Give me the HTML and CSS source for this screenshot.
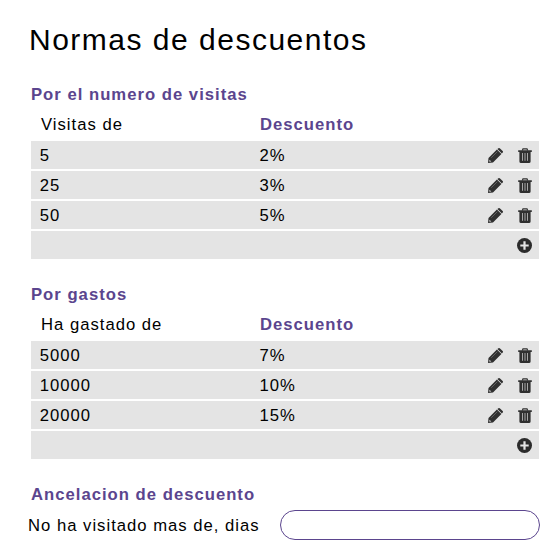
FILE: index.html
```html
<!DOCTYPE html>
<html lang="es">
<head>
<meta charset="utf-8">
<title>Normas de descuentos</title>
<link rel="stylesheet" href="styles.css">
</head>
<body>
<svg class="defs" width="0" height="0">
  <symbol id="pencil" viewBox="0 0 15 15">
    <path fill="#303030" d="M0 15 .5 10 8.9 1.6 13.4 6.1 5 14.5Z M9.4 1.1 10.4.3Q11.2-.2 12 .4L14.7 3.1Q15.3 3.8 14.7 4.6L13.9 5.6Z"/>
    <path fill="none" stroke="#777" stroke-width=".7" d="M3.2 9.8 9.3 3.7"/>
    <path fill="#d0d0d0" d="M1.5 11.7 3.3 13.5 1.7 13.8 1.2 13.3Z"/>
  </symbol>
  <symbol id="trash" viewBox="0 0 14 15">
    <path fill="none" stroke="#303030" stroke-width="1.2" d="M4.3 2.4 5 .8H9L9.7 2.4"/>
    <path fill="#303030" d="M.2 2.2H13.8V4H12.6V13.4Q12.6 15 11 15H3Q1.4 15 1.4 13.4V4H.2Z"/>
    <path fill="none" stroke="#b4b4b4" stroke-width=".9" d="M4.5 5V12.8M7 5V12.8M9.5 5V12.8"/>
  </symbol>
  <symbol id="plus" viewBox="0 0 15 15">
    <circle cx="7.5" cy="7.5" r="7.5" fill="#2b2b2b"/>
    <path fill="none" stroke="#e4e4e4" stroke-width="2.2" d="M7.5 3.3V11.7M3.3 7.5H11.7"/>
  </symbol>
</svg>
<main>
  <h1>Normas de descuentos</h1>
  <section>
    <h2>Por el numero de visitas</h2>
    <div class="head"><span>Visitas de</span><b>Descuento</b></div>
    <div class="row"><span>5</span><span>2%</span><svg class="pencil"><use href="#pencil"/></svg><svg class="trash"><use href="#trash"/></svg></div>
    <div class="row"><span>25</span><span>3%</span><svg class="pencil"><use href="#pencil"/></svg><svg class="trash"><use href="#trash"/></svg></div>
    <div class="row"><span>50</span><span>5%</span><svg class="pencil"><use href="#pencil"/></svg><svg class="trash"><use href="#trash"/></svg></div>
    <div class="row add"><svg class="plus"><use href="#plus"/></svg></div>
  </section>
  <section>
    <h2>Por gastos</h2>
    <div class="head"><span>Ha gastado de</span><b>Descuento</b></div>
    <div class="row"><span>5000</span><span>7%</span><svg class="pencil"><use href="#pencil"/></svg><svg class="trash"><use href="#trash"/></svg></div>
    <div class="row"><span>10000</span><span>10%</span><svg class="pencil"><use href="#pencil"/></svg><svg class="trash"><use href="#trash"/></svg></div>
    <div class="row"><span>20000</span><span>15%</span><svg class="pencil"><use href="#pencil"/></svg><svg class="trash"><use href="#trash"/></svg></div>
    <div class="row add"><svg class="plus"><use href="#plus"/></svg></div>
  </section>
  <section class="last">
    <h2>Ancelacion de descuento</h2>
    <div class="field"><label for="days">No ha visitado mas de, dias</label><input id="days" type="text"></div>
  </section>
</main>
</body>
</html>
```
FILE: styles.css
```css
* { box-sizing: border-box; }
body {
  margin: 0;
  background: #fff;
  color: #000;
  font: 16.67px/28px "Liberation Sans", Arial, sans-serif;
  letter-spacing: 1px;
}
.defs { position: absolute; }
main { padding: 20px 20px 0 28px; }
h1 {
  margin: 0 0 21px 1px;
  font-size: 30px;
  font-weight: 400;
  line-height: 39px;
  letter-spacing: 1.5px;
}
section { height: 200px; }
.last { height: auto; }
h2 {
  margin: 0 0 0 3px;
  font-size: 16.67px;
  line-height: 30px;
  letter-spacing: 1.01px;
  color: #5b458e;
}
.head {
  display: grid;
  grid-template-columns: 219px 1fr;
  height: 31px;
  padding-left: 13px;
  line-height: 30px;
}
.head b { color: #5b458e; }
.row {
  display: grid;
  grid-template-columns: 219.6px 1fr 29.5px 14px;
  align-items: center;
  height: 28px;
  margin: 0 1px 2px 3px;
  padding: 0 7.5px 0 8.8px;
  background: #e4e4e4;
  line-height: 30px;
}
.pencil, .plus { display: block; width: 15px; height: 15px; }
.trash { display: block; width: 14px; height: 15px; }
.row.add { display: flex; justify-content: flex-end; padding-right: 7px; }
.pencil, .trash { margin-bottom: 1px; }
.field { display: flex; align-items: center; height: 30px; line-height: 30px; }
.field label { width: 252px; padding-top: 2px; white-space: nowrap; }
.field input {
  width: 260px;
  height: 30px;
  border: 1px solid #5b458e;
  border-radius: 15px;
  padding: 0 14px;
  background: #fff;
  font: inherit;
  outline: none;
}
```
